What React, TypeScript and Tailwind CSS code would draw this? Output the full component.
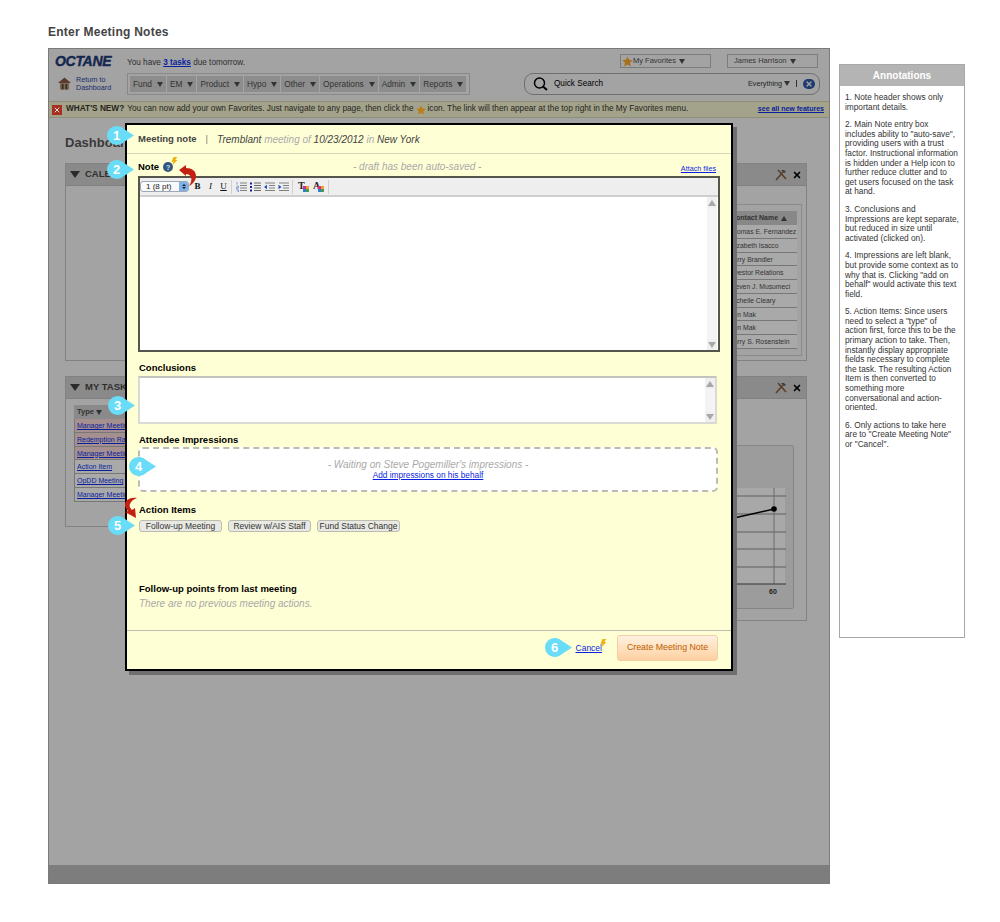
import { X } from "lucide-react";

const navItems = ["Fund", "EM", "Product", "Hypo", "Other", "Operations", "Admin", "Reports"];
const contacts = [
  "Thomas E. Fernandez",
  "Elizabeth Isacco",
  "Barry Brandler",
  "Investor Relations",
  "Steven J. Musumeci",
  "Michelle Cleary",
  "Ken Mak",
  "Ken Mak",
  "Barry S. Rosenstein",
];
const tasks = [
  { name: "Manager Meeting", late: true },
  { name: "Redemption Rate", late: true },
  { name: "Manager Meeting", late: true },
  { name: "Action Item", late: false },
  { name: "OpDD Meeting", late: false },
  { name: "Manager Meeting", late: false },
];
const notes = [
  ["1. Note header shows only", "important details."],
  [
    "2. Main Note entry box",
    'includes ability to "auto-save",',
    "providing users with a trust",
    "factor. Instructional information",
    "is hidden under a Help icon to",
    "further reduce clutter and to",
    "get users focused on the task",
    "at hand.",
  ],
  ["3. Conclusions and", "Impressions are kept separate,", "but reduced in size until", "activated (clicked on)."],
  [
    "4. Impressions are left blank,",
    "but provide some context as to",
    'why that is. Clicking "add on',
    'behalf" would activate this text',
    "field.",
  ],
  [
    "5. Action Items: Since users",
    'need to select a "type" of',
    "action first, force this to be the",
    "primary action to take. Then,",
    "instantly display appropriate",
    "fields necessary to complete",
    "the task. The resulting Action",
    "Item is then converted to",
    "something more",
    "conversational and action-",
    "oriented.",
  ],
  ["6. Only actions to take here", 'are to "Create Meeting Note"', 'or "Cancel".'],
];

function Star({ size = 11, color = "#a8701c", className = "" }: { size?: number; color?: string; className?: string }) {
  return (
    <svg width={size} height={size} viewBox="0 0 24 24" className={`shrink-0 ${className}`}>
      <path d="M12 1l3.4 7.4 8 .9-6 5.4 1.700 8L12 18.600 4.900 22.700l1.700-8-6-5.400 8-.9z" fill={color} />
    </svg>
  );
}

function Bolt({ className }: { className: string }) {
  return (
    <svg width="8" height="9" viewBox="0 0 8 11" className={className}>
      <path d="M3.500 0H8L5.600 3.600H8L1.500 11l2-5.200H.8z" fill="#eeb010" />
    </svg>
  );
}

function Caret({ up = false, className = "" }: { up?: boolean; className?: string }) {
  return up ? (
    <span className={`h-0 w-0 shrink-0 border-x-[3px] border-b-[5px] border-x-transparent border-b-[#333] ${className}`} />
  ) : (
    <span className={`h-0 w-0 shrink-0 border-x-[3px] border-t-[5px] border-x-transparent border-t-[#333] ${className}`} />
  );
}

function Callout({ n, className }: { n: number; className: string }) {
  return (
    <div className={`absolute flex h-[19px] w-[27px] items-center ${className}`}>
      <svg width="27" height="19" viewBox="0 0 27 19" className="absolute left-0 top-0">
        <path d="M9.500 0C12.500 0 15 1 17 3l10 6.500L17 16c-2 2-4.500 3-7.500 3a9.500 9.500 0 0 1 0-19z" fill="#69dcf8" />
      </svg>
      <span className="relative w-[19px] text-center text-[13px] font-bold leading-none text-white">{n}</span>
    </div>
  );
}

function Scrollbar() {
  return (
    <div className="flex w-[10px] shrink-0 flex-col items-center justify-between bg-[#f4f4f4]">
      <span className="flex h-[11px] w-full items-center justify-center bg-[#f0f0f0]">
        <span className="h-0 w-0 border-x-[4px] border-b-[6px] border-x-transparent border-b-[#a8a8a8]" />
      </span>
      <span className="flex h-[11px] w-full items-center justify-center bg-[#f0f0f0]">
        <span className="h-0 w-0 border-x-[4px] border-t-[6px] border-x-transparent border-t-[#a8a8a8]" />
      </span>
    </div>
  );
}

function ListIcon({ kind, className = "" }: { kind: "numbered" | "bullet" | "outdent" | "indent"; className?: string }) {
  const isList = kind === "numbered" || kind === "bullet";
  return (
    <svg width="11" height="10" viewBox="0 0 11 10" className={`shrink-0 ${className}`}>
      {[1, 3.500, 6, 8.500].map((y, i) => (
        <line
          key={y}
          x1={isList ? 4 : i === 0 || i === 3 ? 1 : 5}
          x2="11"
          y1={y}
          y2={y}
          stroke={kind === "bullet" ? "#444" : "#666"}
          strokeWidth=".8"
        />
      ))}
      {kind === "numbered" && <path d="M1 0v2.500M.5 4h2v1.500h-2v1.500h2M.5 8h2v2h-2" fill="none" stroke="#4a70c8" strokeWidth=".6" />}
      {kind === "bullet" && <path d="M0 .5h2v2H0zM0 4h2v2H0zM0 7.500h2v2H0z" fill="#14208c" />}
      {kind === "outdent" && <path d="M0 5l3-2.200v4.400z" fill="#2450c0" />}
      {kind === "indent" && <path d="M3.500 5L.5 2.800v4.400z" fill="#2450c0" />}
    </svg>
  );
}

function ColorSwatch({ letter, className = "" }: { letter: string; className?: string }) {
  return (
    <span className={`relative block h-[11px] w-[11px] shrink-0 font-['Liberation_Serif',serif] text-[10px] font-bold leading-[10px] text-[#222] ${className}`}>
      {letter}
      <svg width="6" height="6" viewBox="0 0 6 6" className="absolute bottom-0 right-0">
        <rect width="3" height="3" fill="#d8288c" />
        <rect x="3" width="3" height="3" fill="#e8a030" />
        <rect y="3" width="3" height="3" fill="#2a7fd0" />
        <rect x="3" y="3" width="3" height="3" fill="#4a9a4a" />
      </svg>
    </span>
  );
}

function Toolbar() {
  const sep = <span className="h-[14px] w-px bg-[#cfcfcf]" />;
  const letter = "w-[9px] text-center font-['Liberation_Serif',serif] text-[9px] leading-none text-[#111]";
  return (
    <div className="flex h-[19px] items-center gap-[3px] border-b-2 border-[#cfcfcf] bg-[#eeeeee]">
      <div className="mr-[1px] flex h-[11px] w-[49px] items-center justify-between overflow-hidden rounded-[3px] border border-[#9ea8b8] bg-[#fafafa]">
        <span className="pl-[5px] text-[8px] leading-none text-[#222]">1 (8 pt)</span>
        <span className="flex h-full w-[9px] flex-col items-center justify-center gap-px bg-[#7fb0e6]">
          <span className="h-0 w-0 border-x-[2px] border-b-[2px] border-x-transparent border-b-[#123]" />
          <span className="h-0 w-0 border-x-[2px] border-t-[2px] border-x-transparent border-t-[#123]" />
        </span>
      </div>
      <span className={`${letter} font-bold`}>B</span>
      <span className={`${letter} mx-[1px] italic`}>I</span>
      <span className={`${letter} underline`}>U</span>
      {sep}
      <ListIcon kind="numbered" className="ml-[1px]" />
      <ListIcon kind="bullet" />
      <ListIcon kind="outdent" />
      <ListIcon kind="indent" />
      {sep}
      <ColorSwatch letter="T" className="ml-[2px]" />
      <ColorSwatch letter="A" className="mx-[1px]" />
      {sep}
    </div>
  );
}

function PanelHeader({ title }: { title: string }) {
  return (
    <div className="flex h-[22px] shrink-0 items-center justify-between border-b border-[#808080] bg-[#8a8a8a] px-[4px]">
      <div className="flex items-center gap-[5px]">
        <span className="h-0 w-0 border-x-[5px] border-t-[7px] border-x-transparent border-t-[#2b2b2b]" />
        <span className="text-[9.500px] font-bold text-[#2f2f2f]">{title}</span>
      </div>
      <div className="flex items-center gap-[5px]">
        <svg width="12" height="12" viewBox="0 0 12 12">
          <path d="M1 11L8 3M3 1l8 9" stroke="#5a3f2a" strokeWidth="1.600" />
          <path d="M6 1h3l2 2-2 1-2-2z" fill="#3d3d3d" />
        </svg>
        <X size={10} strokeWidth={4} color="#000" />
      </div>
    </div>
  );
}

function Chart() {
  return (
    <svg width="65" height="110" viewBox="0 0 65 110" className="absolute bottom-[22px] right-[8px]">
      <rect x="0" y="0" width="52" height="96" fill="#a8a8a8" />
      {[8, 26, 44, 61, 79].map((y) => (
        <line key={y} x1="0" x2="53" y1={y} y2={y} stroke="#5f5f5f" />
      ))}
      <line x1="0.500" x2="0.500" y1="0" y2="96" stroke="#6a6a6a" />
      <line x1="41" x2="41" y1="0" y2="96" stroke="#6a6a6a" />
      <line x1="0" x2="53" y1="96" y2="96" stroke="#333" />
      <polyline points="1,30 41,21" fill="none" stroke="#000" strokeWidth="1.500" />
      <circle cx="1" cy="30" r="2.800" fill="#000" />
      <circle cx="41" cy="21" r="2.800" fill="#000" />
      <text x="40" y="106" textAnchor="middle" fontSize="7" fontWeight="700" fill="#222">60</text>
      <text x="0" y="106" textAnchor="middle" fontSize="7" fontWeight="700" fill="#222">50</text>
    </svg>
  );
}

function BackgroundPage() {
  return (
    <div className="flex h-full flex-col bg-[#a3a3a3] text-[#2e2e2e]">
      {/* Top bar */}
      <div className="flex h-[52px] shrink-0 justify-between pl-[6px] pr-[9px]">
        <div className="flex">
          <div className="w-[72px]">
            <div className="pt-[4px] text-[14px] font-bold italic leading-[16px] tracking-[-0.3px] text-[#14274f] [-webkit-text-stroke:0.4px_#14274f]">OCTANE</div>
            <div className="mt-[7px] flex items-center gap-[5px] pl-[3px]">
              <svg width="13" height="13" viewBox="0 0 14 13">
                <path d="M0 6L7 0l7 6z" fill="#5b3b30" />
                <path d="M2 6h10v7H2z" fill="#7b6a58" />
                <path d="M4 7h2v6H4zM8 7h2v6H8z" fill="#3c2d22" />
              </svg>
              <span className="text-[7.200px] leading-[7.500px] text-[#1a2c6c]">
                Return to
                <br />
                Dashboard
              </span>
            </div>
          </div>
          <div>
            <div className="pt-[8px] text-[8.200px] leading-[11px]">
              You have <span className="font-bold text-[#0a1f9e] underline">3 tasks</span> due tomorrow.
            </div>
            <div className="mt-[5px] flex h-[22px] w-[343px] items-center gap-px overflow-hidden border border-[#888] p-[2px]">
              {navItems.map((item) => (
                <div key={item} className="flex h-full items-center gap-[5px] whitespace-nowrap bg-[#8d8d8d] px-[3px] text-[8.300px] text-[#333]">
                  {item}
                  <Caret />
                </div>
              ))}
            </div>
          </div>
        </div>
        <div className="flex w-[296px] flex-col items-end">
          <div className="mr-[2px] mt-[5px] flex gap-[16px]">
            <div className="flex h-[14px] w-[91px] items-center border border-[#7c7c7c] pl-[1px] text-[7.500px] text-[#333]">
              <Star />
              My Favorites
              <Caret className="ml-[3px]" />
            </div>
            <div className="flex h-[14px] w-[91px] items-center border border-[#7c7c7c] pl-[6px] text-[7.500px] text-[#333]">
              James Harrison
              <Caret className="ml-[3px]" />
            </div>
          </div>
          <div className="mt-[5px] flex h-[22px] w-[296px] items-center justify-between rounded-[9px] border border-[#6f6f6f] pl-[8px] pr-[4px]">
            <div className="flex items-center gap-[5px]">
              <svg width="16" height="14" viewBox="0 0 16 14">
                <circle cx="6.500" cy="6" r="5" fill="none" stroke="#000" strokeWidth="1.500" />
                <path d="M10 9.500l4 3.500" stroke="#000" strokeWidth="2" />
              </svg>
              <span className="text-[8.200px] text-black">Quick Search</span>
            </div>
            <div className="flex items-center gap-[6px] text-[7.200px] text-[#222]">
              Everything
              <Caret className="-ml-[4px]" />
              <span className="h-[7px] w-px bg-[#333]" />
              <span className="flex h-[10px] w-[12px] items-center justify-center rounded-full bg-[#1f3a70]">
                <X size={8} strokeWidth={4} color="#a3a3a3" />
              </span>
            </div>
          </div>
        </div>
      </div>

      {/* What's new */}
      <div className="flex h-[17px] shrink-0 items-center justify-between border-y border-[#8f8f78] bg-[#a3a28a] pl-[3px] pr-[5px] text-[8.250px] text-[#26261e]">
        <div className="flex items-center whitespace-nowrap">
          <span className="mr-[4px] flex h-[10px] w-[10px] items-center justify-center bg-[#a5301f]">
            <X size={8} strokeWidth={3} color="#ddd" />
          </span>
          <b>WHAT'S NEW?</b>
          <span className="ml-[3px]">You can now add your own Favorites. Just navigate to any page, then click the</span>
          <Star size={10} color="#bb7d18" className="mx-[2px]" />
          icon. The link will then appear at the top right in the My Favorites menu.
        </div>
        <span className="text-[7px] font-bold text-[#0a1f9e] underline">see all new features</span>
      </div>

      {/* Dashboard */}
      <div className="pl-[16px] pr-[22px]">
        <div className="pt-[16px] text-[13px] font-bold leading-[18px] text-[#3a3a3a]">Dashboard</div>
        <div className="mt-[11px] flex h-[198px] flex-col border border-[#828282] bg-[#a3a3a3]">
          <PanelHeader title="CALENDAR" />
          <div className="flex flex-1 justify-end pr-[4px] pt-[18px]">
            <div className="h-[152px] w-[98px] border border-[#8a8a8a] p-[4px] pt-[6px]">
              <div className="flex h-[14px] items-center gap-[3px] bg-[#888] pl-[22px] text-[7px] font-bold text-[#333]">
                Contact Name
                <Caret up />
              </div>
              {contacts.map((c, i) => (
                <div key={i} className="h-[13.750px] whitespace-nowrap border-b border-[#777] bg-[#a9a9a9] pl-[20px] text-[6.800px] leading-[13px] text-[#333]">
                  {c}
                </div>
              ))}
            </div>
          </div>
        </div>
        <div className="mt-[15px] flex items-start gap-[12px]">
          <div className="flex h-[151px] w-[320px] shrink-0 flex-col border border-[#828282]">
            <PanelHeader title="MY TASKS" />
            <div className="pl-[8px] pt-[6px]">
              <div className="flex h-[14px] w-[120px] items-center gap-[2px] bg-[#8a8a8a] pl-[3px] text-[7.500px] font-bold text-[#333]">
                Type
                <Caret />
              </div>
              {tasks.map((t, i) => (
                <div key={i} className={`h-[13.800px] w-[120px] border-b border-l border-[#777] pl-[2px] text-[7px] leading-[13px] text-[#0a1f9e] underline ${t.late ? "bg-[#a58f8f]" : "bg-[#a9a9a9]"}`}>
                  {t.name}
                </div>
              ))}
            </div>
          </div>
          <div className="relative flex h-[245px] flex-1 flex-col border border-[#828282]">
            <PanelHeader title="PERFORMANCE" />
            <div className="mb-[11px] ml-[12px] mr-[12px] mt-[46px] flex-1 rounded-[2px] border border-[#858585] bg-[#9c9c9c]" />
            <Chart />
          </div>
        </div>
      </div>

      <div className="mt-auto h-[18px] bg-[#7d7d7d]" />
    </div>
  );
}

function Modal() {
  return (
    <div className="absolute left-[76px] top-[74px] h-[548px] w-[608px] border-2 border-black bg-[#ffffd6] text-black shadow-[4px_4px_0_0_#6f6f6f]">
      <div className="flex h-[29px] items-center border-b border-[#d5d5c0] pl-[11px] text-[9.500px] text-[#444]">
        <b>Meeting note</b>
        <span className="mx-[9px] text-[#777]">|</span>
        <i className="text-[10px]">
          Tremblant <span className="text-[#aaaaaa]">meeting of</span> 10/23/2012 <span className="text-[#aaaaaa]">in</span> New York
        </i>
      </div>

      <div className="px-[11px]">
        <div className="flex h-[22px] items-end pb-[2px]">
          <div className="relative flex w-[215px] items-center text-[9.500px] font-bold leading-[14px]">
            Note
            <span className="ml-[4px] flex h-[10px] w-[10px] items-center justify-center rounded-full bg-[#34557f] text-[7px] font-bold leading-none text-[#cfe0f5]">?</span>
            <Bolt className="absolute left-[32px] -top-[3px]" />
          </div>
          <div className="flex-1 text-[10px] italic leading-[14px] text-[#a9a9a9]">- draft has been auto-saved -</div>
          <span className="pr-[4px] text-[7.200px] leading-[11px] text-[#0b1fe0] underline">Attach files</span>
        </div>
        <div className="h-[176px] w-[582px] border-2 border-[#55554c] bg-white">
          <Toolbar />
          <div className="flex h-[153px] justify-end pr-[1px]">
            <Scrollbar />
          </div>
        </div>

        <div className="mt-[10px] pl-[1px] text-[9.500px] font-bold leading-[12px]">Conclusions</div>
        <div className="mt-[2px] flex h-[48px] w-[579px] justify-end border-2 border-[#dadad4] border-t-[#c4c4be] bg-white">
          <Scrollbar />
        </div>

        <div className="mt-[10px] pl-[1px] text-[9.500px] font-bold leading-[12px]">Attendee Impressions</div>
        <div className="mt-[1px] flex h-[45px] w-[580px] flex-col items-center justify-center rounded-[5px] border-2 border-dashed border-[#bbbbb0] bg-white pb-[1px]">
          <div className="text-[10px] italic leading-[11px] text-[#a9a9a9]">- Waiting on Steve Pogemiller's impressions -</div>
          <div className="text-[8.300px] leading-[10px] text-[#0b1fe0] underline">Add impressions on his behalf</div>
        </div>

        <div className="mt-[12px] pl-[1px] text-[9.500px] font-bold leading-[12px]">Action Items</div>
        <div className="ml-[1px] mt-[4px] flex gap-[6px]">
          {["Follow-up Meeting", "Review w/AIS Staff", "Fund Status Change"].map((b) => (
            <span key={b} className="flex h-[12px] w-[83px] items-center justify-center rounded-[3px] border border-[#bcbcb0] bg-[#e9e9e3] text-[8.500px] text-[#333]">
              {b}
            </span>
          ))}
        </div>

        <div className="mt-[51px] pl-[1px] text-[9.500px] font-bold leading-[12px]">Follow-up points from last meeting</div>
        <div className="mt-[3px] pl-[1px] text-[10px] italic leading-[11px] text-[#a9a9a9]">There are no previous meeting actions.</div>
      </div>

      <div className="absolute bottom-0 left-0 right-0 flex h-[39px] items-start justify-end gap-[15px] border-t border-[#bdbdae] pr-[13px] pt-[4px]">
        <span className="relative mt-[9px] text-[8.500px] leading-none text-[#0b1fe0] underline">
          Cancel
          <Bolt className="absolute -right-[5px] -top-[5px]" />
        </span>
        <span className="flex h-[26px] w-[101px] items-center justify-center rounded-[3px] border border-[#f0cfa8] bg-gradient-to-b from-[#fff1e0] to-[#fdd0a0] text-[8.800px] text-[#bb5f00]">
          Create Meeting Note
        </span>
      </div>

      {/* Annotation markers */}
      <Callout n={1} className="left-[-20px] top-[1px]" />
      <Callout n={2} className="left-[-20px] top-[35px]" />
      <Callout n={3} className="left-[-19px] top-[271px]" />
      <Callout n={4} className="left-[2px] top-[332px]" />
      <Callout n={5} className="left-[-19px] top-[391px]" />
      <Callout n={6} className="left-[418px] top-[513px]" />

      {/* Red arrows */}
      <svg width="22" height="24" viewBox="0 0 22 24" className="absolute left-[50px] top-[39px]">
        <path d="M2 6l7-5v3c6 0 10 3 10 8 0 4-3 8-7 10 2-3 3-6 2-9-1-2-3-3-5-3v2z" fill="#c42012" />
      </svg>
      <svg width="18" height="22" viewBox="0 0 18 22" className="absolute left-[-5px] top-[372px]">
        <path d="M15 1C8 0 3 3 3 8c0 2 1 4 3 6l-3 1 11 6-1-10-3 2c-2-2-3-4-2-6 1-3 4-5 7-6z" fill="#c42012" />
      </svg>
    </div>
  );
}

export default function App() {
  return (
    <div className="flex min-h-[922px] bg-white pl-[48px] font-['Liberation_Sans',Arial,sans-serif]">
      <div className="w-[782px] shrink-0">
        <h1 className="pt-[24px] text-[12px] font-bold leading-[16px] tracking-[0.25px] text-[#444]">Enter Meeting Notes</h1>
        <div className="relative mt-[8px] h-[836px] overflow-hidden border border-[#7a7a7a]">
          <BackgroundPage />
          <Modal />
        </div>
      </div>
      <aside className="ml-[9px] mt-[64px] flex h-[574px] w-[126px] flex-col border border-[#a8a8a8]">
        <div className="flex h-[21px] shrink-0 items-center justify-center bg-[#b4b4b4] text-[10px] font-bold text-white">Annotations</div>
        <div className="flex flex-col gap-[8px] pl-[5px] pt-[7px] text-[8.300px] leading-[9.600px] text-[#333]">
          {notes.map((lines, i) => (
            <p key={i}>
              {lines.map((line, j) => (
                <span key={j} className="block whitespace-nowrap">{line}</span>
              ))}
            </p>
          ))}
        </div>
      </aside>
    </div>
  );
}
